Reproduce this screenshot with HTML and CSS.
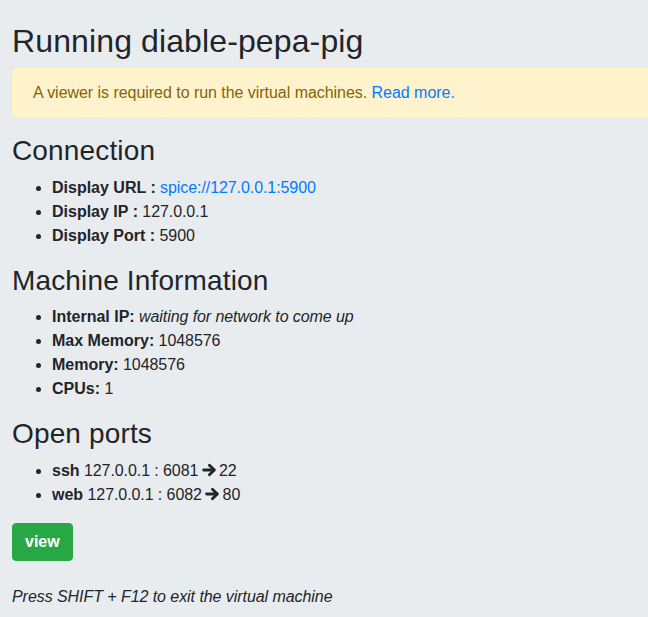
FILE: index.html
```html
<!DOCTYPE html>
<html lang="en">
<head>
<meta charset="utf-8">
<title>Running diable-pepa-pig</title>
<link rel="stylesheet" href="styles.css">
</head>
<body>
<div class="page">
  <h1 class="title">Running diable-pepa-pig</h1>
  <div class="alert">A viewer is required to run the virtual machines. <a href="#">Read more.</a></div>

  <h3 class="section">Connection</h3>
  <ul class="info">
    <li><b>Display URL :</b> <a href="#">spice://127.0.0.1:5900</a></li>
    <li><b>Display IP :</b> 127.0.0.1</li>
    <li><b>Display Port :</b> 5900</li>
  </ul>

  <h3 class="section">Machine Information</h3>
  <ul class="info">
    <li><b>Internal IP:</b> <i>waiting for network to come up</i></li>
    <li><b>Max Memory:</b> 1048576</li>
    <li><b>Memory:</b> 1048576</li>
    <li><b>CPUs:</b> 1</li>
  </ul>

  <h3 class="section">Open ports</h3>
  <ul class="info">
    <li><b>ssh</b> 127.0.0.1 : 6081 <svg class="arrow" viewBox="0 0 15 14" aria-hidden="true"><path d="M1.6 7H12" /><path d="M7.4 2.2L12.3 7L7.4 11.8" /></svg> 22</li>
    <li><b>web</b> 127.0.0.1 : 6082 <svg class="arrow" viewBox="0 0 15 14" aria-hidden="true"><path d="M1.6 7H12" /><path d="M7.4 2.2L12.3 7L7.4 11.8" /></svg> 80</li>
  </ul>

  <div class="actions"><button class="btn">view</button></div>

  <p class="hint"><i>Press SHIFT + F12 to exit the virtual machine</i></p>
</div>
</body>
</html>
```

FILE: styles.css
```css
html, body {
  margin: 0;
  padding: 0;
  overflow: hidden;
}
body {
  background: #e9ecef;
  color: #212529;
  font-family: "Liberation Sans", Arial, sans-serif;
  font-size: 16px;
  line-height: 1.5;
}
.page {
  padding: 21.6px 0 0 12px;
  margin-right: -1px;
}
.title {
  font-size: 32px;
  font-weight: 400;
  line-height: 1.2;
  letter-spacing: 0.12px;
  margin: 0 0 8px 0;
}
.alert {
  background: #fff3cd;
  border: 1px solid #ffeeba;
  color: #856404;
  border-radius: 4px 0 0 4px;
  padding: 12px 20px;
  margin: 0 0 16px 0;
  letter-spacing: -0.04px;
}
a {
  color: #007bff;
  text-decoration: none;
}
.section {
  font-size: 28px;
  font-weight: 400;
  line-height: 1.2;
  letter-spacing: 0.15px;
  margin: 0 0 8px 0;
}
.info {
  margin: 0 0 16px 0;
  padding-left: 40px;
}
.info li {
  letter-spacing: -0.08px;
}
.info b {
  font-weight: 700;
  letter-spacing: 0;
}
.arrow {
  width: 15px;
  height: 14px;
  vertical-align: -1px;
  fill: none;
  stroke: #212529;
  stroke-width: 2.8;
  stroke-linecap: round;
  stroke-linejoin: round;
  margin: 0 -2px 0 -1px;
}
.actions {
  margin: 0 0 24px 0;
}
.btn {
  display: inline-block;
  font-family: inherit;
  font-size: 16px;
  font-weight: 700;
  line-height: 1.5;
  color: #fff;
  background: #28a745;
  border: 1px solid #28a745;
  border-radius: 4px;
  padding: 6px 12px;
  vertical-align: top;
}
.hint {
  margin: 0;
  letter-spacing: -0.06px;
}
```
